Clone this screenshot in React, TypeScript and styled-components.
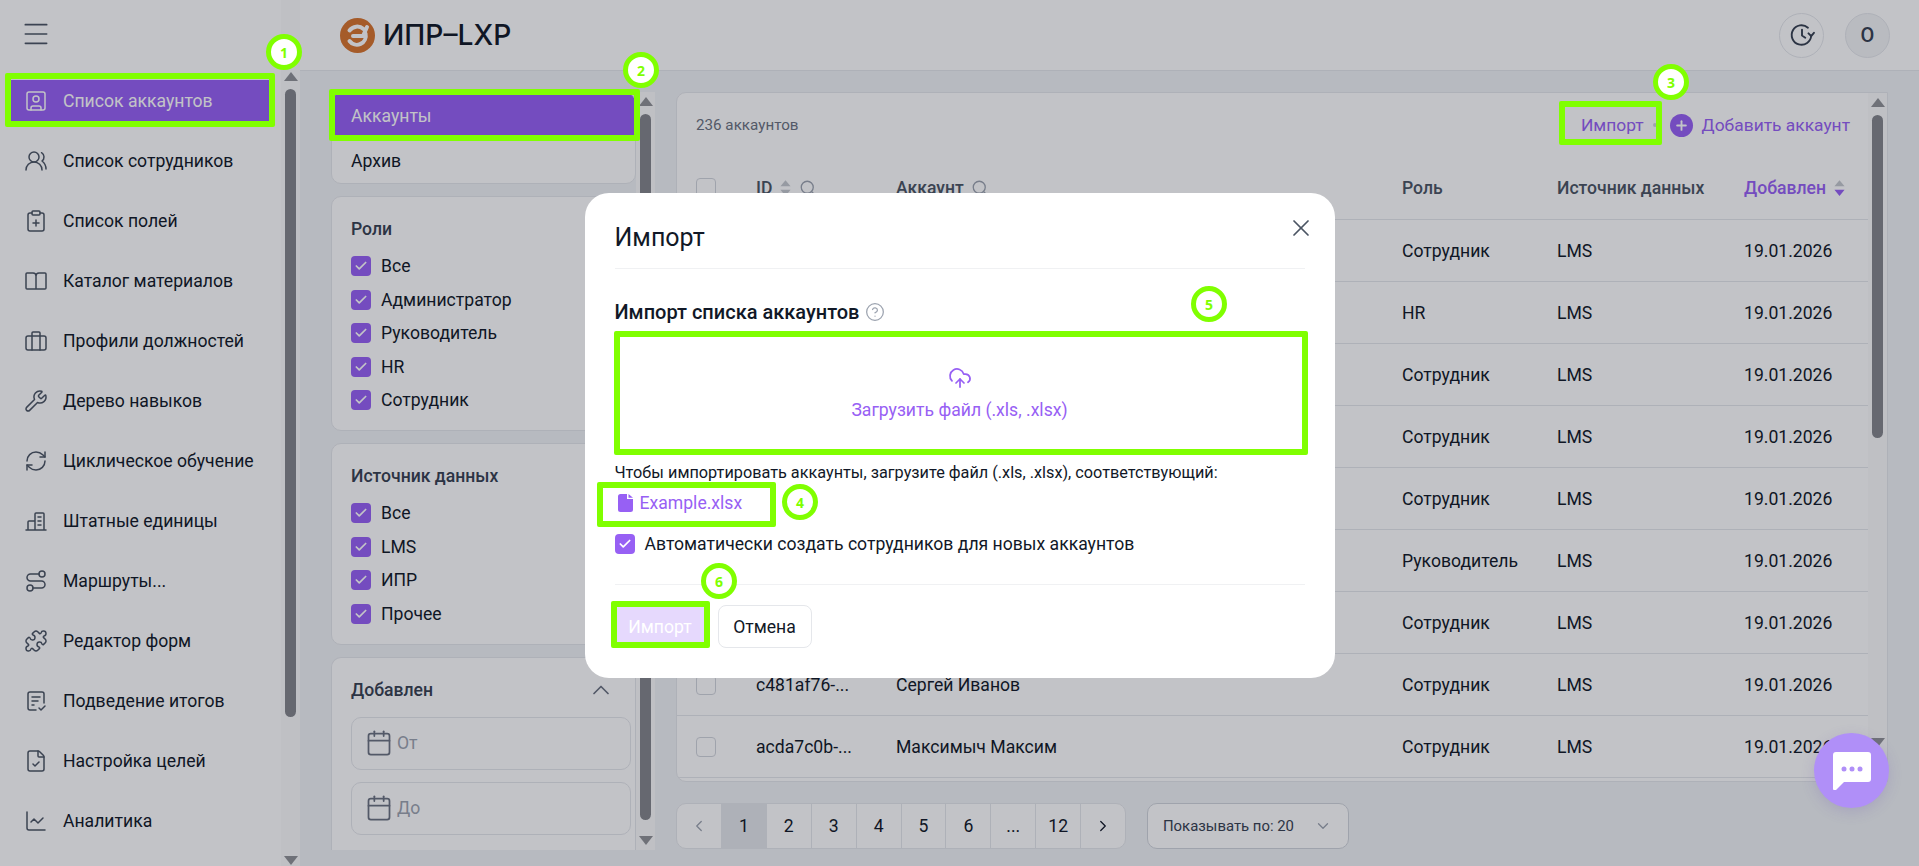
import React from 'react';
import styled, { createGlobalStyle } from 'styled-components';
import {
  Menu, SquareUser, UsersRound, ClipboardPlus, Wrench, RefreshCw, Route, Puzzle, FileCheck,
  ChartLine, CloudUpload, CircleHelp, X, Calendar, Search, Check, Plus,
  ChevronUp, ChevronDown, ChevronLeft, ChevronRight,
} from 'lucide-react';

const GlobalStyle = createGlobalStyle`
  html, body {
    margin: 0;
    height: 100%;
    overflow: hidden;
  }
  body {
    font-family: Roboto, "Liberation Sans", sans-serif;
    font-size: 17.6px;
    color: #111827;
    background: #f1f3f6;
  }
  * { box-sizing: border-box; }
`;

const PURPLE = '#9760f4';
const GREEN = '#80ff00';

const Page = styled.div`
  position: relative;
  display: grid;
  grid-template-columns: 300px 1fr;
  height: 100vh;
  overflow: hidden;
`;

/* rails */
const RailBox = styled.div<{ $top: number }>`
  width: 19px;
  flex: none;
  display: flex;
  flex-direction: column;
  align-items: center;
  padding-top: ${(p) => p.$top}px;
  background: #fbfbfb;
  height: 100%;
`;

const RailUp = styled.span`
  width: 0;
  height: 0;
  border-left: 7px solid transparent;
  border-right: 7px solid transparent;
  border-bottom: 9px solid #909296;
`;

const RailDown = styled.span`
  width: 0;
  height: 0;
  border-left: 7px solid transparent;
  border-right: 7px solid transparent;
  border-top: 9px solid #909296;
`;

const RailThumb = styled.span<{ $height: number; $gap: number }>`
  width: 11px;
  height: ${(p) => p.$height}px;
  margin: 8px 0 ${(p) => p.$gap}px;
  border-radius: 6px;
  background: #84868b;
`;

const Rail = ({ top, thumb, gap }: { top: number; thumb: number; gap: number }) => (
  <RailBox $top={top}>
    <RailUp />
    <RailThumb $height={thumb} $gap={gap} />
    <RailDown />
  </RailBox>
);

/* sidebar */
const Sidebar = styled.aside`
  display: flex;
  background: #fff;
  height: 100vh;
`;

const SideColumn = styled.div`
  flex: 1;
  min-width: 0;
`;

const Burger = styled.div`
  height: 80px;
  padding: 18px 0 0 20px;
  color: #4b5563;
`;

const Nav = styled.nav`
  display: flex;
  flex-direction: column;
  gap: 18px;
  padding: 0 12px 0 11px;
`;

const NavItem = styled.a<{ $active?: boolean }>`
  display: flex;
  align-items: center;
  gap: 15px;
  height: 42px;
  padding-left: 13px;
  color: ${(p) => (p.$active ? '#fff' : '#111827')};
  background: ${(p) => (p.$active ? PURPLE : 'transparent')};
  white-space: nowrap;

  svg {
    flex: none;
    color: ${(p) => (p.$active ? '#fff' : '#4b5563')};
  }
`;

const IconSvg = ({ children }: { children: React.ReactNode }) => (
  <svg width="24" height="24" viewBox="0 0 24 24" fill="none" stroke="currentColor" strokeWidth="1.5" strokeLinecap="round" strokeLinejoin="round">
    {children}
  </svg>
);

const BookIcon = () => (
  <IconSvg>
    <path d="M3 4h6a3 3 0 0 1 3 3 3 3 0 0 1 3-3h6a1 1 0 0 1 1 1v14a1 1 0 0 1-1 1H3a1 1 0 0 1-1-1V5a1 1 0 0 1 1-1zM12 7v13" />
  </IconSvg>
);

const CaseIcon = () => (
  <IconSvg>
    <rect x="2" y="7" width="20" height="14" rx="2" />
    <path d="M8 7V4a1 1 0 0 1 1-1h6a1 1 0 0 1 1 1v3M8 7v14M16 7v14" />
  </IconSvg>
);

const BuildingIcon = () => (
  <IconSvg>
    <path d="M2 21h20M4 21v-8a1 1 0 0 1 1-1h6M11 21V5a1 1 0 0 1 1-1h7a1 1 0 0 1 1 1v16M14 8h3M14 12h3M14 16h3" />
  </IconSvg>
);

const ReportIcon = () => (
  <IconSvg>
    <path d="M12 21H6a2 2 0 0 1-2-2V5a2 2 0 0 1 2-2h12a2 2 0 0 1 2 2v9M8 8h8M8 12h6M8 16h2M15 19l2 2 4-4" />
  </IconSvg>
);

const ClockIcon = () => (
  <svg width="26" height="26" viewBox="0 0 24 24" fill="none" stroke="currentColor" strokeWidth="1.75" strokeLinecap="round" strokeLinejoin="round">
    <path d="M20.5 12.5a9 9 0 1 1-3-7.2" />
    <path d="M23 10l-2.5 3L18 10.5M12 7v5.5l3 2" />
  </svg>
);

const lucideProps = { size: 24, strokeWidth: 1.5 };

const navItems: { label: string; icon: React.ReactNode }[] = [
  { label: 'Список аккаунтов', icon: <SquareUser {...lucideProps} /> },
  { label: 'Список сотрудников', icon: <UsersRound {...lucideProps} /> },
  { label: 'Список полей', icon: <ClipboardPlus {...lucideProps} /> },
  { label: 'Каталог материалов', icon: <BookIcon /> },
  { label: 'Профили должностей', icon: <CaseIcon /> },
  { label: 'Дерево навыков', icon: <Wrench {...lucideProps} /> },
  { label: 'Циклическое обучение', icon: <RefreshCw {...lucideProps} /> },
  { label: 'Штатные единицы', icon: <BuildingIcon /> },
  { label: 'Маршруты...', icon: <Route {...lucideProps} /> },
  { label: 'Редактор форм', icon: <Puzzle {...lucideProps} /> },
  { label: 'Подведение итогов', icon: <ReportIcon /> },
  { label: 'Настройка целей', icon: <FileCheck {...lucideProps} /> },
  { label: 'Аналитика', icon: <ChartLine {...lucideProps} /> },
];

/* header */
const Main = styled.div`
  display: grid;
  grid-template-rows: 71px 1fr;
  min-width: 0;
  height: 100vh;
`;

const Header = styled.header`
  display: flex;
  align-items: center;
  justify-content: space-between;
  padding: 0 29px 0 40px;
  background: #fff;
  border-bottom: 1px solid #e5e7eb;
`;

const Brand = styled.div`
  display: flex;
  align-items: center;
  gap: 8px;
  font-family: Inter, Roboto, sans-serif;
  font-size: 28.2px;
  font-weight: 500;
  color: #111827;
`;

const HeaderActions = styled.div`
  display: flex;
  gap: 21px;
`;

const RoundButton = styled.div<{ $filled?: boolean }>`
  width: 45px;
  height: 45px;
  display: flex;
  align-items: center;
  justify-content: center;
  border: 1px solid #e5e7eb;
  border-radius: 50%;
  background: ${(p) => (p.$filled ? '#f3f4f6' : '#fff')};
  font-size: 20px;
  font-weight: 500;
  color: #374151;
`;

/* content */
const Content = styled.div`
  display: flex;
  gap: 21px;
  padding: 21px 31px 16px 31px;
  min-height: 0;
`;

const FilterColumn = styled.div`
  display: flex;
  width: 324px;
  flex: none;
  height: 758px;
  overflow: hidden;
`;

const FilterStack = styled.div`
  width: 305px;
  flex: none;
  display: flex;
  flex-direction: column;
  gap: 12px;
`;

const FilterCard = styled.section`
  flex: none;
  background: #fff;
  border: 1px solid #e5e7eb;
  border-radius: 10px;
  overflow: hidden;
`;

const TabRow = styled.div<{ $active?: boolean }>`
  height: 45px;
  display: flex;
  align-items: center;
  padding-left: 19px;
  color: ${(p) => (p.$active ? '#fff' : '#111827')};
  background: ${(p) => (p.$active ? PURPLE : 'transparent')};
`;

const FilterGroup = styled(FilterCard)`
  padding: 22px 20px 20px 19px;
`;

const DateGroup = styled(FilterGroup)`
  padding-right: 4px;
  padding-bottom: 14px;
  border-bottom: none;
  border-radius: 10px 10px 0 0;
`;

const GroupTitle = styled.div`
  height: 20px;
  line-height: 20px;
  font-weight: 500;
  color: #374151;
  margin-bottom: 17px;
  display: flex;
  align-items: center;
  justify-content: space-between;
  padding-right: 16px;

  svg {
    color: #6b7280;
  }
`;

const Options = styled.div`
  display: flex;
  flex-direction: column;
  gap: 13.5px;
`;

const Option = styled.label`
  display: flex;
  align-items: center;
  gap: 10px;
  height: 20px;
`;

const Box = styled.span<{ $checked?: boolean }>`
  width: 20px;
  height: 20px;
  flex: none;
  display: flex;
  align-items: center;
  justify-content: center;
  border-radius: 4px;
  background: ${(p) => (p.$checked ? PURPLE : '#fff')};
  border: ${(p) => (p.$checked ? 'none' : '1px solid #d1d5db')};
  color: #fff;
`;

const CheckBox = ({ checked = true }: { checked?: boolean }) => (
  <Box $checked={checked}>{checked && <Check size={14} strokeWidth={3} />}</Box>
);

const DateInput = styled.div`
  height: 53px;
  display: flex;
  align-items: center;
  gap: 4px;
  padding-left: 13px;
  margin-bottom: 12px;
  border: 1px solid #e5e7eb;
  border-radius: 10px;
  color: #9ca3af;

  svg {
    color: #6b7280;
  }
`;

/* table */
const TableColumn = styled.div`
  flex: 1;
  min-width: 0;
  display: flex;
  flex-direction: column;
  gap: 21px;
`;

const TablePanel = styled.section`
  display: flex;
  height: 690px;
  background: #fff;
  border: 1px solid #e5e7eb;
  border-radius: 10px 0 0 10px;
  overflow: hidden;
`;

const TableBody = styled.div`
  flex: 1;
  min-width: 0;
`;

const TableTop = styled.div`
  height: 64px;
  display: flex;
  align-items: center;
  justify-content: space-between;
  padding: 0 18px 0 19px;
`;

const Count = styled.span`
  font-size: 15.2px;
  color: #6b7280;
`;

const TopActions = styled.div`
  display: flex;
  align-items: center;
  font-size: 17.4px;
  color: ${PURPLE};
`;

const ImportLink = styled.span`
  margin-right: 9px;
`;

const Dot = styled.span`
  width: 4px;
  height: 4px;
  border-radius: 50%;
  background: #d1d5db;
  margin-right: 13px;
`;

const PlusCircle = styled.span`
  width: 23px;
  height: 23px;
  display: flex;
  align-items: center;
  justify-content: center;
  border-radius: 50%;
  background: ${PURPLE};
  color: #fff;
  margin-right: 9px;
`;

const columns = '60px 140px 506px 155px 187px 1fr';

const HeadRow = styled.div`
  display: grid;
  grid-template-columns: ${columns};
  align-items: center;
  height: 63px;
  padding-left: 19px;
  border-bottom: 1px solid #e5e7eb;
  font-weight: 500;
  color: #4b5563;
`;

const HeadCell = styled.div<{ $active?: boolean }>`
  display: flex;
  align-items: center;
  gap: 7px;
  color: ${(p) => (p.$active ? PURPLE : '#4b5563')};
`;

const Row = styled.div`
  display: grid;
  grid-template-columns: ${columns};
  align-items: center;
  height: 62px;
  padding-left: 19px;
  border-bottom: 1px solid #e5e7eb;
  color: #111827;
`;

const SortIcon = ({ active }: { active?: boolean }) => (
  <svg width="13" height="18" viewBox="0 0 10 16">
    <path d="M5 1l4.5 5.5h-9z" fill="#c5c8ce" />
    <path d="M5 15L.5 9.5h9z" fill={active ? PURPLE : '#c5c8ce'} />
  </svg>
);

const rows = [
  { id: '', name: '', role: 'Сотрудник' },
  { id: '', name: '', role: 'HR' },
  { id: '', name: '', role: 'Сотрудник' },
  { id: '', name: '', role: 'Сотрудник' },
  { id: '', name: '', role: 'Сотрудник' },
  { id: '', name: '', role: 'Руководитель' },
  { id: '', name: '', role: 'Сотрудник' },
  { id: 'c481af76-...', name: 'Сергей Иванов', role: 'Сотрудник' },
  { id: 'acda7c0b-...', name: 'Максимыч Максим', role: 'Сотрудник' },
  { id: '', name: '', role: '' },
];

/* pagination */
const Footer = styled.div`
  display: flex;
  gap: 21px;
`;

const Pager = styled.div`
  display: flex;
  width: 450px;
  height: 46px;
  background: #fff;
  border: 1px solid #e5e7eb;
  border-radius: 10px;
  overflow: hidden;
`;

const PageCell = styled.div<{ $current?: boolean }>`
  flex: 1;
  display: flex;
  align-items: center;
  justify-content: center;
  border-left: 1px solid ${(p) => (p.$current ? 'transparent' : '#e5e7eb')};
  background: ${(p) => (p.$current ? '#e5e7eb' : 'transparent')};
  color: #111827;

  &:first-child {
    border-left: none;
    color: #9ca3af;
  }
`;

const PerPage = styled.div`
  width: 202px;
  height: 46px;
  display: flex;
  align-items: center;
  justify-content: space-between;
  padding: 0 16px 0 15px;
  background: #fff;
  border: 1px solid #d1d5db;
  border-radius: 10px;
  font-size: 14.9px;
  color: #374151;

  svg {
    color: #9ca3af;
  }
`;

/* modal */
const Overlay = styled.div`
  position: absolute;
  inset: 0;
  z-index: 10;
  display: flex;
  justify-content: center;
  align-items: flex-start;
  padding-top: 193px;
  background: rgba(12, 16, 32, 0.25);
`;

const Modal = styled.div`
  position: relative;
  width: 750px;
  height: 485px;
  padding: 30px;
  background: #fff;
  border-radius: 24px;
`;

const ModalTitle = styled.h2`
  margin: 0;
  height: 46px;
  line-height: 30px;
  font-size: 25px;
  font-weight: 400;
  border-bottom: 1px solid #f0f1f3;
`;

const CloseButton = styled.span`
  position: absolute;
  top: 21px;
  right: 20px;
  color: #4b5563;
`;

const SectionTitle = styled.div`
  display: flex;
  align-items: center;
  gap: 6px;
  height: 24px;
  margin-top: 31px;
  font-size: 20px;
  font-weight: 500;

  svg {
    color: #9ca3af;
  }
`;

const Dropzone = styled.div`
  height: 122px;
  margin-top: 8px;
  display: flex;
  flex-direction: column;
  align-items: center;
  justify-content: center;
  gap: 10px;
  color: ${PURPLE};
`;

const Hint = styled.div`
  height: 20px;
  line-height: 20px;
  margin-top: 9px;
  font-size: 16.25px;
  color: #111827;
  white-space: nowrap;
`;

const FileLink = styled.div`
  display: flex;
  align-items: center;
  gap: 7px;
  height: 24px;
  margin-top: 8px;
  padding-left: 3px;
  color: ${PURPLE};
`;

const AutoCreate = styled.label`
  display: flex;
  align-items: center;
  gap: 10px;
  height: 24px;
  margin-top: 17px;
`;

const ModalFooter = styled.div`
  display: flex;
  gap: 12px;
  margin-top: 28px;
  padding-top: 20px;
  border-top: 1px solid #f0f1f3;
`;

const ActionButton = styled.button<{ $primary?: boolean }>`
  height: 43px;
  width: ${(p) => (p.$primary ? '91px' : '94px')};
  padding: 0;
  font: inherit;
  border-radius: 8px;
  border: ${(p) => (p.$primary ? 'none' : '1px solid #e5e7eb')};
  background: ${(p) => (p.$primary ? '#e6d9fd' : '#fff')};
  color: ${(p) => (p.$primary ? '#fff' : '#111827')};
`;

/* floating chat */
const ChatBubble = styled.div`
  position: absolute;
  z-index: 20;
  left: 1814px;
  top: 733px;
  width: 75px;
  height: 75px;
  display: flex;
  align-items: center;
  justify-content: center;
  border-radius: 50%;
  background: #b08ff8;
  box-shadow: 0 4px 14px rgba(100, 70, 180, 0.18);
`;

/* annotations put over the screenshot */
const Frame = styled.div<{ $x: number; $y: number; $w: number; $h: number }>`
  position: absolute;
  z-index: 30;
  left: ${(p) => p.$x}px;
  top: ${(p) => p.$y}px;
  width: ${(p) => p.$w}px;
  height: ${(p) => p.$h}px;
  border: 6px solid ${GREEN};
  border-radius: 2px;
`;

const Badge = styled.div<{ $x: number; $y: number }>`
  position: absolute;
  z-index: 30;
  left: ${(p) => p.$x - 18}px;
  top: ${(p) => p.$y - 18}px;
  width: 36px;
  height: 36px;
  display: flex;
  align-items: center;
  justify-content: center;
  border: 5px solid ${GREEN};
  border-radius: 50%;
  background: #fff;
  color: ${GREEN};
  font-family: "Open Sans", Roboto, sans-serif;
  font-size: 14px;
  font-weight: 700;
`;

const frames = [
  { x: 5, y: 73, w: 270, h: 54 },
  { x: 329, y: 89, w: 311, h: 52 },
  { x: 1559, y: 101, w: 103, h: 44 },
  { x: 597, y: 482, w: 179, h: 45 },
  { x: 614, y: 331, w: 694, h: 124 },
  { x: 611, y: 601, w: 99, h: 47 },
];

const badges = [
  { n: 1, x: 284, y: 52 },
  { n: 2, x: 641, y: 70 },
  { n: 3, x: 1671, y: 82 },
  { n: 4, x: 800, y: 502 },
  { n: 5, x: 1209, y: 304 },
  { n: 6, x: 719, y: 581 },
];

const Logo = () => (
  <svg width="35" height="35" viewBox="0 0 35 35">
    <circle cx="17.5" cy="17.5" r="17.5" fill="#d8742c" />
    <g fill="none" stroke="#fff" strokeWidth="4" strokeLinecap="round">
      <path d="M9.5 12.5a9.5 9.5 0 0 1 14-1.5M25.5 15.5a9 9 0 0 1-16 7.5" />
      <path d="M13 18h10l4-9" />
    </g>
  </svg>
);

const App = () => (
  <Page>
    <GlobalStyle />
    <Sidebar>
      <SideColumn>
        <Burger>
          <Menu size={32} strokeWidth={1.25} />
        </Burger>
        <Nav>
          {navItems.map((item, i) => (
            <NavItem key={item.label} $active={i === 0}>
              {item.icon}
              {item.label}
            </NavItem>
          ))}
        </Nav>
      </SideColumn>
      <Rail top={72} thumb={628} gap={139} />
    </Sidebar>

    <Main>
      <Header>
        <Brand>
          <Logo />
          ИПР–LXP
        </Brand>
        <HeaderActions>
          <RoundButton>
            <ClockIcon />
          </RoundButton>
          <RoundButton $filled>О</RoundButton>
        </HeaderActions>
      </Header>

      <Content>
        <FilterColumn>
          <FilterStack>
            <FilterCard>
              <TabRow $active>Аккаунты</TabRow>
              <TabRow>Архив</TabRow>
            </FilterCard>
            <FilterGroup>
              <GroupTitle>Роли</GroupTitle>
              <Options>
                {['Все', 'Администратор', 'Руководитель', 'HR', 'Сотрудник'].map((o) => (
                  <Option key={o}>
                    <CheckBox />
                    {o}
                  </Option>
                ))}
              </Options>
            </FilterGroup>
            <FilterGroup>
              <GroupTitle>Источник данных</GroupTitle>
              <Options>
                {['Все', 'LMS', 'ИПР', 'Прочее'].map((o) => (
                  <Option key={o}>
                    <CheckBox />
                    {o}
                  </Option>
                ))}
              </Options>
            </FilterGroup>
            <DateGroup>
              <GroupTitle>
                Добавлен
                <ChevronUp size={28} strokeWidth={1.5} />
              </GroupTitle>
              <DateInput>
                <Calendar size={28} strokeWidth={1.5} />
                От
              </DateInput>
              <DateInput>
                <Calendar size={28} strokeWidth={1.5} />
                До
              </DateInput>
            </DateGroup>
          </FilterStack>
          <Rail top={5} thumb={706} gap={16} />
        </FilterColumn>

        <TableColumn>
          <TablePanel>
            <TableBody>
              <TableTop>
                <Count>236 аккаунтов</Count>
                <TopActions>
                  <ImportLink>Импорт</ImportLink>
                  <Dot />
                  <PlusCircle>
                    <Plus size={15} strokeWidth={3} />
                  </PlusCircle>
                  Добавить аккаунт
                </TopActions>
              </TableTop>
              <HeadRow>
                <CheckBox checked={false} />
                <HeadCell>
                  ID <SortIcon /> <Search size={18} strokeWidth={1.75} color="#9ca3af" />
                </HeadCell>
                <HeadCell>
                  Аккаунт <Search size={18} strokeWidth={1.75} color="#9ca3af" />
                </HeadCell>
                <HeadCell>Роль</HeadCell>
                <HeadCell>Источник данных</HeadCell>
                <HeadCell $active>
                  Добавлен <SortIcon active />
                </HeadCell>
              </HeadRow>
              {rows.map((row, i) => (
                <Row key={i}>
                  <CheckBox checked={false} />
                  <span>{row.id}</span>
                  <span>{row.name}</span>
                  <span>{row.role}</span>
                  <span>{row.role && 'LMS'}</span>
                  <span>{row.role && '19.01.2026'}</span>
                </Row>
              ))}
            </TableBody>
            <Rail top={5} thumb={323} gap={300} />
          </TablePanel>

          <Footer>
            <Pager>
              <PageCell>
                <ChevronLeft size={18} strokeWidth={1.75} />
              </PageCell>
              {['1', '2', '3', '4', '5', '6', '...', '12'].map((n) => (
                <PageCell key={n} $current={n === '1'}>
                  {n}
                </PageCell>
              ))}
              <PageCell>
                <ChevronRight size={18} strokeWidth={1.75} />
              </PageCell>
            </Pager>
            <PerPage>
              Показывать по: 20
              <ChevronDown size={18} strokeWidth={1.75} />
            </PerPage>
          </Footer>
        </TableColumn>
      </Content>
    </Main>

    <Overlay>
      <Modal>
        <ModalTitle>Импорт</ModalTitle>
        <CloseButton>
          <X size={28} strokeWidth={1.5} />
        </CloseButton>
        <SectionTitle>
          Импорт списка аккаунтов
          <CircleHelp size={20} strokeWidth={1.5} />
        </SectionTitle>
        <Dropzone>
          <CloudUpload size={24} strokeWidth={1.75} />
          Загрузить файл (.xls, .xlsx)
        </Dropzone>
        <Hint>Чтобы импортировать аккаунты, загрузите файл (.xls, .xlsx), соответствующий:</Hint>
        <FileLink>
          <svg width="15" height="18" viewBox="0 0 15 18">
            <path d="M2.5 0H9v5h6v10.5a2.5 2.5 0 0 1-2.5 2.5h-10A2.5 2.5 0 0 1 0 15.5v-13A2.5 2.5 0 0 1 2.5 0zM10.5 0L15 3.8H10.5z" fill={PURPLE} />
          </svg>
          Example.xlsx
        </FileLink>
        <AutoCreate>
          <CheckBox />
          Автоматически создать сотрудников для новых аккаунтов
        </AutoCreate>
        <ModalFooter>
          <ActionButton $primary>Импорт</ActionButton>
          <ActionButton>Отмена</ActionButton>
        </ModalFooter>
      </Modal>
    </Overlay>

    <ChatBubble>
      <svg width="38" height="38" viewBox="0 0 38 38">
        <path d="M3 0h32a3 3 0 0 1 3 3v24a3 3 0 0 1-3 3H11l-8 8a2 2 0 0 1-3-1V3a3 3 0 0 1 3-3z" fill="#fff" />
        <circle cx="11" cy="17" r="2.5" fill="#b08ff8" />
        <circle cx="19" cy="17" r="2.5" fill="#b08ff8" />
        <circle cx="27" cy="17" r="2.5" fill="#b08ff8" />
      </svg>
    </ChatBubble>

    {frames.map((f) => (
      <Frame key={`${f.x}-${f.y}`} $x={f.x} $y={f.y} $w={f.w} $h={f.h} />
    ))}
    {badges.map((b) => (
      <Badge key={b.n} $x={b.x} $y={b.y}>
        {b.n}
      </Badge>
    ))}
  </Page>
);

export default App;
